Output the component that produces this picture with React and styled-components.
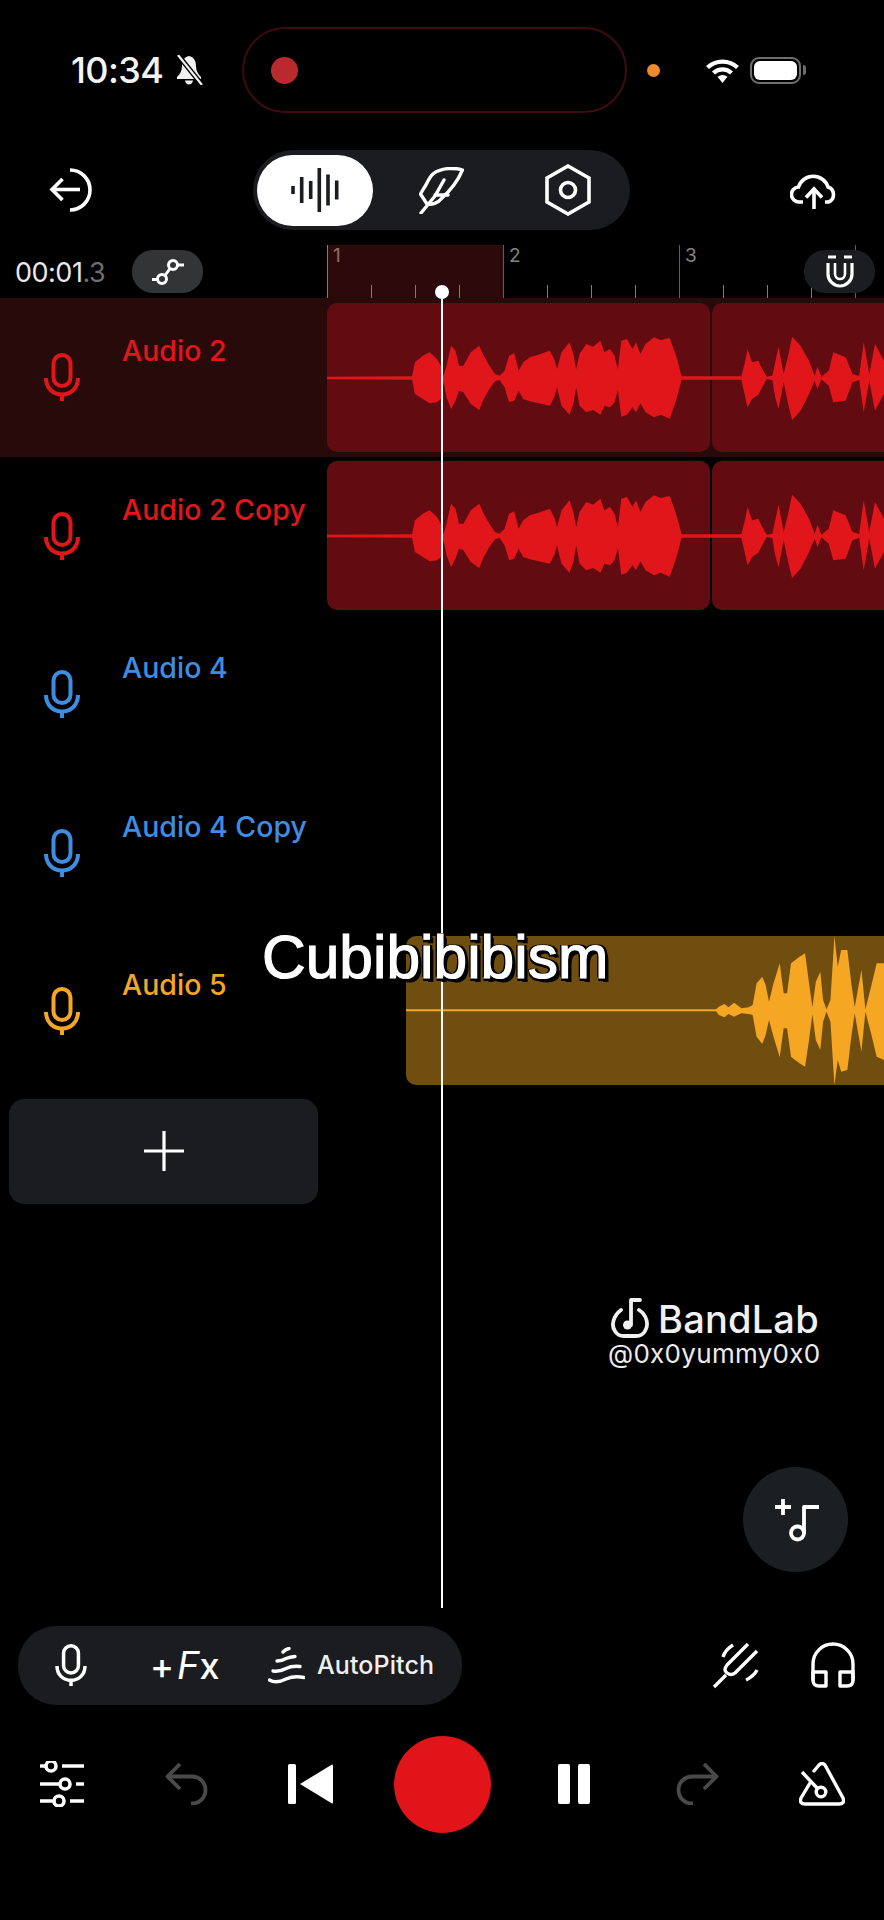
import React from "react";
import styled, { createGlobalStyle } from "styled-components";

const Global = createGlobalStyle`
  html, body { margin: 0; padding: 0; background: #000; }
  * { box-sizing: border-box; }
`;

const UI = `Inter, "Noto Sans", sans-serif`;

const Page = styled.div`
  position: relative;
  width: 884px;
  height: 1920px;
  overflow: hidden;
  background: #000;
  color: #fff;
  font-family: ${UI};
  display: flex;
  flex-direction: column;
`;

/* status bar */
const StatusBar = styled.div`
  height: 140px;
  display: flex;
  align-items: center;
  padding-left: 71px;
`;
const Clock = styled.div`
  width: 92px;
  font-size: 36px;
  font-weight: 500;
  letter-spacing: -0.6px;
  line-height: 1;
  color: #f4f4f4;
  white-space: nowrap;
`;
const Island = styled.div`
  width: 385px;
  height: 86px;
  margin-left: 39px;
  border: 2px solid #3d0b12;
  border-radius: 43px;
  display: flex;
  align-items: center;
  padding-left: 27px;
`;
const RecDot = styled.div`
  width: 27px;
  height: 27px;
  border-radius: 50%;
  background: #b92a2c;
`;
const OrangeDot = styled.div`
  width: 13px;
  height: 13px;
  border-radius: 50%;
  background: #f18a2b;
  margin-left: 20px;
`;
const Battery = styled.div`
  position: relative;
  width: 51px;
  height: 27px;
  margin-left: 10px;
  border: 2.5px solid #6e6e6e;
  border-radius: 9px;
  padding: 2px;
  &::before {
    content: "";
    display: block;
    height: 100%;
    border-radius: 6px;
    background: #fff;
  }
  &::after {
    content: "";
    position: absolute;
    right: -7px;
    top: 6px;
    width: 3px;
    height: 10px;
    border-radius: 0 3px 3px 0;
    background: #6e6e6e;
  }
`;

/* toolbar */
const Toolbar = styled.div`
  height: 105px;
  display: flex;
  align-items: center;
  justify-content: space-between;
  padding: 0 46px 5px 49px;
`;
const Segment = styled.div`
  width: 377px;
  height: 80px;
  border-radius: 40px;
  background: #1b1c1f;
  display: flex;
  align-items: center;
  padding-left: 4px;
`;
const SegmentActive = styled.div`
  width: 116px;
  height: 71px;
  border-radius: 36px;
  background: #fff;
  display: flex;
  align-items: center;
  justify-content: center;
`;

/* timeline */
const TimelineRow = styled.div`
  position: relative;
  height: 53px;
  display: grid;
  grid-template-columns: 327px 1fr;
`;
const TimeArea = styled.div`
  display: flex;
  align-items: center;
  padding-left: 15px;
`;
const TimeText = styled.div`
  width: 117px;
  font-size: 27px;
  font-weight: 400;
  letter-spacing: -0.5px;
  color: #e8e8e8;
  white-space: nowrap;
  margin-top: 1px;
  span { color: #6f6f6f; }
`;
const RoundButton = styled.div`
  width: 71px;
  height: 43px;
  border-radius: 21px;
  background: ${(p) => p.$bg};
  display: flex;
  align-items: center;
  justify-content: center;
`;
const MagnetSlot = styled.div`
  position: absolute;
  right: 9px;
  top: 5px;
`;
const Ruler = styled.div`
  display: flex;
  overflow: hidden;
`;
const Bar = styled.div`
  flex: 0 0 176px;
  height: 53px;
  border-left: 1.5px solid ${(p) => (p.$active ? "#8a7476" : "#5c5f63")};
  background: ${(p) => (p.$active ? "#2c0a0c" : "transparent")};
  display: flex;
  flex-direction: column;
  justify-content: space-between;
`;
const BarNumber = styled.div`
  font-size: 19px;
  line-height: 20px;
  padding-left: 5px;
  margin-top: 1px;
  color: ${(p) => (p.$active ? "#8d6f72" : "#80858b")};
`;
const Ticks = styled.div`
  display: flex;
  height: 13px;
`;
const Tick = styled.div`
  flex: 0 0 44px;
  margin-left: ${(p) => (p.$first ? "-1.5px" : "0")};
  border-left: 1.5px solid ${(p) => (p.$first ? "transparent" : "#7a7d80")};
`;

/* tracks */
const Track = styled.div`
  height: 158.6px;
  display: grid;
  grid-template-columns: 327px 1fr;
  background: ${(p) => (p.$selected ? "#290a0b" : "transparent")};
`;
const TrackHead = styled.div`
  display: flex;
  align-items: flex-start;
  color: ${(p) => p.$color};
  padding-left: 44px;
`;
const MicSlot = styled.div`
  margin-top: 55px;
  width: 36px;
`;
const TrackName = styled.div`
  margin-left: 42px;
  margin-top: 36px;
  font-size: 28.5px;
  line-height: 34px;
  font-weight: 500;
  white-space: nowrap;
`;
const Lane = styled.div`
  position: relative;
  display: flex;
  gap: 2px;
  padding-top: ${(p) => p.$top}px;
  padding-left: ${(p) => p.$left}px;
`;
const Clip = styled.div`
  flex: 0 0 ${(p) => p.$w}px;
  height: 149px;
  background: ${(p) => p.$bg};
  border-radius: ${(p) => p.$radius};
`;
const WaveSvg = styled.svg`
  position: absolute;
  left: ${(p) => p.$left}px;
  top: ${(p) => p.$top}px;
  display: block;
`;
const AddTrack = styled.div`
  width: 309px;
  height: 105px;
  margin: 8px 0 0 9px;
  border-radius: 15px;
  background: #1b1c1f;
  display: flex;
  align-items: center;
  justify-content: center;
`;

/* middle area */
const Workspace = styled.div`
  height: 422px;
  display: flex;
  flex-direction: column;
  align-items: flex-end;
`;
const Watermark = styled.div`
  margin-top: 93px;
  margin-right: 62px;
  width: 214px;
  display: flex;
  flex-direction: column;
`;
const BrandRow = styled.div`
  display: flex;
  align-items: center;
  gap: 8px;
  padding-left: 2px;
  height: 42px;
`;
const BrandName = styled.div`
  font-size: 38px;
  font-weight: 500;
  letter-spacing: 0.2px;
  line-height: 1;
  margin-top: 3px;
  color: #f1f1f1;
`;
const Handle = styled.div`
  font-size: 26px;
  line-height: 30px;
  letter-spacing: 0.3px;
  color: #ececec;
  white-space: nowrap;
`;
const Fab = styled.div`
  width: 105px;
  height: 105px;
  margin-top: 98px;
  margin-right: 36px;
  border-radius: 50%;
  background: #1c1f22;
  display: flex;
  align-items: center;
  justify-content: center;
`;

/* bottom controls */
const ToolRow = styled.div`
  height: 79px;
  display: flex;
  align-items: center;
  justify-content: space-between;
  padding: 0 29px 0 18px;
`;
const ToolPill = styled.div`
  width: 444px;
  height: 79px;
  border-radius: 38px;
  background: #1b1c1f;
  display: flex;
  align-items: center;
  padding-left: 37px;
`;
const FxLabel = styled.div`
  margin-left: 63px;
  width: 66px;
  font-size: 36px;
  line-height: 1;
  font-weight: 500;
  white-space: nowrap;
  b { font-weight: 400; font-style: italic; margin-left: 3px; font-size: 38px; }
  span { font-weight: 500; letter-spacing: -1px; }
`;
const PitchLabel = styled.div`
  margin-left: 12px;
  font-size: 25px;
  font-weight: 500;
  letter-spacing: 0.1px;
  color: #f0f0f0;
`;
const RightTools = styled.div`
  display: flex;
  align-items: center;
  gap: 52px;
`;
const Slot = styled.div`
  margin-left: ${(p) => p.$ml || 0}px;
  display: flex;
`;
const Transport = styled.div`
  height: 97px;
  margin-top: 31px;
  padding-left: 40px;
  display: flex;
  align-items: center;
`;
const RecordButton = styled.div`
  width: 97px;
  height: 97px;
  border-radius: 50%;
  background: #e01419;
  margin-left: 60px;
`;
const Pause = styled.div`
  margin-left: 67px;
  display: flex;
  gap: 8px;
  &::before, &::after {
    content: "";
    width: 12px;
    height: 40px;
    border-radius: 2px;
    background: #fff;
  }
`;

/* overlays */
const Playhead = styled.div`
  position: absolute;
  left: 440.5px;
  top: 291px;
  width: 2.5px;
  height: 1317px;
  background: #fff;
`;
const PlayheadKnob = styled.div`
  position: absolute;
  left: 434.5px;
  top: 284.5px;
  width: 14px;
  height: 14px;
  border-radius: 50%;
  background: #fff;
`;
const Caption = styled.div`
  position: absolute;
  left: 262px;
  top: 922px;
  font-family: "Liberation Sans", Arial, sans-serif;
  font-size: 60.5px;
  line-height: 70px;
  color: #fff;
  white-space: nowrap;
  -webkit-text-stroke: 1.2px #fff;
  text-shadow: 2px 2px 0 #000, 3px 3px 0 #000, 4px 4px 0 #000, -2px -1px 0 #000, 3px -1px 0 #000, -1px 3px 0 #000;
`;

/* icons */
const Line = (p) => <svg fill="none" stroke="currentColor" strokeLinecap="round" strokeLinejoin="round" style={{ display: "block", color: p.color || "#fff" }} {...p} />;

const Mic = ({ color = "currentColor", w = 36, h = 48 }) => (
  <Line width={w} height={h} viewBox="0 0 36 48" strokeWidth="4" color={color} strokeLinecap="butt">
    <rect x="9.5" y="2" width="17" height="31" rx="8.5" />
    <path d="M2 25 C2 35 9 41.5 18 41.5 C27 41.5 34 35 34 25" />
    <path d="M18 41 V48" />
  </Line>
);
const BellSlash = () => (
  <svg width="28" height="30" viewBox="0 0 28 30" style={{ display: "block", marginLeft: 12 }}>
    <path fill="#f2f2f2" d="M14 1 C9 2 7 6 7 11 C7 16 5 19 2 22 V24 H26 V22 C23 19 21 16 21 11 C21 6 19 2 14 1 Z M10 25.5 H18 C17.5 28 16 29.5 14 29.5 C12 29.5 10.5 28 10 25.5 Z" />
    <path stroke="#000" strokeWidth="5" d="M3 0 L27 30" />
    <path stroke="#f2f2f2" strokeWidth="2.2" d="M3 0 L27 30" />
  </svg>
);
const Wifi = () => (
  <svg width="35" height="25" viewBox="0 0 35 25" fill="none" style={{ display: "block", marginLeft: 45 }}>
    <path stroke="#fff" strokeWidth="4.4" d="M2.5 9.5 A22 22 0 0 1 32.5 9.5" />
    <path stroke="#fff" strokeWidth="4.4" d="M8.5 15 A13 13 0 0 1 26.5 15" />
    <path fill="#fff" d="M12.5 18.8 Q17.5 15 22.5 18.8 L17.5 25 Z" />
  </svg>
);
const Back = () => (
  <Line width="44" height="44" viewBox="0 0 44 44" strokeWidth="3.6" strokeLinecap="butt" strokeLinejoin="miter">
    <path d="M21 2 A20 20 0 0 1 21 42" />
    <path d="M3 21.5 H31" />
    <path d="M13.5 11 L3 21.5 L13.5 32" />
  </Line>
);
const Bars = () => (
  <svg width="48" height="44" viewBox="0 0 48 44" style={{ display: "block" }}>
    {[[2, 8], [10.7, 26], [19.7, 18], [28.3, 44], [37, 31], [45.7, 19]].map(([x, h]) => (
      <rect key={x} x={x - 1.8} y={22 - h / 2} width="3.6" height={h} fill="#1b1c1f" />
    ))}
  </svg>
);
const FeatherIcon = () => (
  <Line width="45" height="47" viewBox="0 0 45 47" strokeWidth="3.4" style={{ display: "block", color: "#fff", marginLeft: 46 }}>
    <path d="M43.5 3 C36 0.5 22 0.5 14 7 C9.5 11 8 17 5 21 L1.5 27 L8 37 C13 38 19 36 22 32 C30 25 38 16 43.5 3 Z" />
    <path d="M2 46 L16 29 L25 13" />
    <path d="M16 28 H29" />
  </Line>
);
const Hex = () => (
  <Line width="46" height="52" viewBox="0 0 46 52" strokeWidth="3.6" strokeLinejoin="miter" style={{ display: "block", color: "#fff", marginLeft: 81 }}>
    <path d="M23 2 L44 14 V38 L23 50 L2 38 V14 Z" />
    <circle cx="23" cy="26" r="7.5" />
  </Line>
);
const Upload = () => (
  <Line width="48" height="38" viewBox="0 0 48 38" strokeWidth="3.6" strokeLinecap="butt" strokeLinejoin="miter">
    <path d="M13 31 H9.5 A7.5 7.5 0 0 1 8.5 16 A15.5 15.5 0 0 1 38 16 A8 8 0 0 1 38.5 31 H35" />
    <path d="M24 38 V19" />
    <path d="M16 26.5 L24 18 L32 26.5" />
  </Line>
);
const LinkIcon = () => (
  <Line width="34" height="30" viewBox="0 0 34 30" strokeWidth="3" strokeLinecap="butt">
    <circle cx="11" cy="22" r="4.5" />
    <circle cx="22" cy="8" r="4.5" />
    <path d="M14 18.5 L19 11.5 M1 22.5 H6.5 M26.5 8 H33" />
  </Line>
);
const Magnet = () => (
  <Line width="30" height="34" viewBox="0 0 30 34" strokeWidth="3.2" strokeLinecap="butt">
    <path d="M3 2 H11 M19 2 H27" />
    <path d="M3 8 V19 A12 12 0 0 0 27 19 V8" />
    <path d="M10 8 V19 A5 5 0 0 0 20 19 V8" strokeWidth="2.6" />
  </Line>
);
const Plus = () => (
  <Line width="42" height="42" viewBox="0 0 42 42" strokeWidth="3.2" strokeLinecap="butt">
    <path d="M21 1 V41 M1 21 H41" />
  </Line>
);
const Logo = () => (
  <Line width="40" height="41" viewBox="0 0 40 41" strokeWidth="3.8" color="#f1f1f1">
    <path d="M11 13 C3 19 1 29 5 34 C7 38 11 39 14 39 H26 C30 39 33 38 35 34 C39 28 37 18 29 13" />
    <path d="M21 28 V3 H30" />
    <circle cx="17.5" cy="28" r="4.5" fill="#f1f1f1" stroke="none" />
  </Line>
);
const AddNote = () => (
  <Line width="48" height="47" viewBox="0 0 48 47" strokeWidth="3.8" strokeLinecap="butt">
    <path d="M11 3 V19 M3 11 H19" />
    <path d="M32 38 V11 H47" />
    <circle cx="25.5" cy="37" r="6.5" />
  </Line>
);
const Pitch = () => (
  <Line width="37" height="37" viewBox="0 0 37 37" strokeWidth="3.4" style={{ display: "block", color: "#fff", marginLeft: 52 }}>
    <path d="M15 5 Q18 2 21 1.5" />
    <path d="M9 14 Q14 14 18 11.5 Q22 10 27 9.5" />
    <path d="M5 24 Q12 25 18 21.5 Q24 18.5 32 19.5" />
    <path d="M1.5 33 Q8 37 18 32 Q26 28.5 36 30.5" />
  </Line>
);
const Fork = () => (
  <Line width="47" height="47" viewBox="0 0 47 47" strokeWidth="3.4" strokeLinecap="butt">
    <path d="M2 45 L14 33" />
    <path d="M36 2 L15 23 Q11 28 15 31 Q19 34 23 31 L45 9" />
    <path d="M11 15 Q13 8 21 3" />
    <path d="M34 38 Q42 34 45 28" />
  </Line>
);
const Headphones = () => (
  <Line width="44" height="46" viewBox="0 0 44 46" strokeWidth="3.4">
    <path d="M2 38 V22 A20 20 0 0 1 42 22 V38" />
    <path d="M2 30 H15 V44 H8 Q2 44 2 38 Z" />
    <path d="M42 30 H29 V44 H36 Q42 44 42 38 Z" />
  </Line>
);
const Sliders = () => (
  <Line width="44" height="46" viewBox="0 0 44 46" strokeWidth="3.6" strokeLinecap="butt">
    <path d="M0 5 H6 M22 5 H44 M0 23 H20 M36 23 H44 M0 40 H14 M30 40 H44" />
    <circle cx="11" cy="5" r="5" />
    <circle cx="25" cy="23" r="5" />
    <circle cx="19" cy="40" r="5" />
  </Line>
);
const Undo = ({ flip, ml }) => (
  <Slot $ml={ml}>
    <Line width="44" height="42" viewBox="0 0 44 42" strokeWidth="3.8" strokeLinecap="butt" color="#4a4a4a">
      <g transform={flip ? "translate(44 0) scale(-1 1)" : undefined}>
        <path d="M3 13.5 H27 A13.5 13.5 0 0 1 27 40.5 H26" />
        <path d="M15 1 L2.5 13.5 L15 26" />
      </g>
    </Line>
  </Slot>
);
const SkipBack = () => (
  <svg width="46" height="40" viewBox="0 0 46 40" style={{ display: "block", marginLeft: 79 }}>
    <rect x="0" y="0" width="8" height="40" rx="1.5" fill="#fff" />
    <path d="M12 20 L44 0.5 Q45 0 45 2 V38 Q45 40 44 39.5 Z" fill="#fff" />
  </svg>
);
const Metronome = () => (
  <Line width="46" height="44" viewBox="0 0 46 44" strokeWidth="3.4" style={{ display: "block", color: "#fff", marginLeft: 80 }}>
    <path d="M15 9 L20 3 Q23 0 26 3 L44 36 Q46 42 40 42 H6 Q0 42 2 36 L11 21" />
    <path d="M3 10 L19 27" strokeLinecap="butt" />
    <circle cx="22" cy="30" r="4.8" />
  </Line>
);

/* waveform outlines: [x, top, bottom] in waveform units */
const RED_WAVE = [
  [580, 258, 266], [731, 257, 267], [736, 215, 310], [750, 195, 325], [762, 185, 338], [775, 205, 335], [782, 225, 325], [787, 255, 275],
  [792, 225, 320], [800, 165, 355], [808, 180, 330], [814, 225, 300], [822, 225, 305], [835, 185, 340], [850, 165, 358], [858, 195, 325], [868, 225, 295], [878, 250, 272],
  [886, 255, 268], [895, 240, 290], [903, 195, 335], [912, 188, 330], [920, 240, 300], [928, 215, 325], [940, 200, 332], [955, 192, 338],
  [975, 180, 345], [983, 205, 320], [988, 235, 290], [996, 185, 345], [1010, 155, 372], [1017, 190, 340], [1022, 236, 290], [1028, 190, 345], [1040, 160, 365],
  [1052, 168, 358], [1065, 150, 372], [1072, 185, 345], [1082, 175, 350], [1090, 195, 335], [1096, 236, 298], [1102, 150, 378], [1112, 145, 372], [1122, 175, 350], [1128, 155, 365], [1136, 190, 338],
  [1145, 160, 365], [1160, 140, 380], [1172, 148, 372], [1188, 142, 384], [1200, 200, 325], [1209, 257, 267], [1315, 257, 267], [1322, 210, 320], [1326, 175, 350],
  [1334, 215, 325], [1345, 210, 312], [1352, 235, 290], [1360, 258, 265], [1370, 255, 268], [1375, 215, 320], [1381, 168, 355], [1390, 250, 275], [1398, 195, 340], [1405, 138, 388],
  [1420, 165, 360], [1435, 210, 310], [1445, 255, 270], [1450, 228, 295], [1457, 258, 266], [1470, 240, 285], [1478, 185, 335],
  [1500, 200, 330], [1512, 250, 275], [1524, 256, 268], [1532, 155, 365], [1542, 250, 270], [1552, 160, 360], [1568, 210, 310],
];
const AMBER_WAVE = [
  [720, 328, 334], [1270, 328, 334], [1275, 320, 345], [1285, 312, 352], [1292, 322, 342], [1302, 308, 350], [1315, 325, 340],
  [1328, 322, 342], [1335, 315, 345], [1342, 250, 410], [1352, 230, 432], [1358, 255, 405], [1364, 305, 360], [1372, 250, 410], [1383, 190, 472],
  [1390, 280, 385], [1396, 280, 385], [1403, 190, 470], [1418, 170, 490], [1428, 160, 500], [1435, 250, 420], [1441, 322, 343], [1447, 245, 420], [1455, 215, 450], [1460, 300, 365],
  [1466, 328, 335], [1473, 300, 365], [1480, 108, 555], [1486, 200, 480], [1492, 150, 515], [1503, 150, 510], [1510, 250, 410], [1516, 322, 340], [1528, 210, 455], [1535, 328, 335],
  [1545, 260, 400], [1555, 190, 470], [1568, 190, 480],
];
const outline = (pts) =>
  "M" + pts.map((p) => `${p[0]} ${p[1]}`).join(" L") + " L" + [...pts].reverse().map((p) => `${p[0]} ${p[2]}`).join(" L") + " Z";

const Wave = ({ pts, color, left, top, width, box }) => (
  <WaveSvg $left={left} $top={top} width={width} height="149" viewBox={box} preserveAspectRatio="none">
    <path d={outline(pts)} fill={color} />
  </WaveSvg>
);

const RED = "#e0161b";
const BLUE = "#3f8de0";
const AMBER = "#f5a623";

const RedLane = ({ top }) => (
  <Lane $top={top} $left={0}>
    <Clip $w={383} $bg="#620c11" $radius="10px" />
    <Clip $w={200} $bg="#620c11" $radius="10px 0 0 10px" />
    <Wave pts={RED_WAVE} color={RED} left={0} top={top} width={557} box="580 37 988 447" />
  </Lane>
);

export default function App() {
  return (
    <Page>
      <Global />
      <StatusBar>
        <Clock>10:34</Clock>
        <BellSlash />
        <Island>
          <RecDot />
        </Island>
        <OrangeDot />
        <Wifi />
        <Battery />
      </StatusBar>

      <Toolbar>
        <Back />
        <Segment>
          <SegmentActive><Bars /></SegmentActive>
          <FeatherIcon />
          <Hex />
        </Segment>
        <Upload />
      </Toolbar>

      <TimelineRow>
        <TimeArea>
          <TimeText>00:01<span>.3</span></TimeText>
          <RoundButton $bg="#333436"><LinkIcon /></RoundButton>
        </TimeArea>
        <Ruler>
          {[1, 2, 3, 4].map((n) => (
            <Bar key={n} $active={n === 1}>
              <BarNumber $active={n === 1}>{n <= 3 ? n : ""}</BarNumber>
              <Ticks>
                {[0, 1, 2, 3].map((t) => <Tick key={t} $first={t === 0} />)}
              </Ticks>
            </Bar>
          ))}
        </Ruler>
        <MagnetSlot>
          <RoundButton $bg="#1c1d20"><Magnet /></RoundButton>
        </MagnetSlot>
      </TimelineRow>

      <Track $selected>
        <TrackHead $color={RED}><MicSlot><Mic /></MicSlot><TrackName>Audio 2</TrackName></TrackHead>
        <RedLane top={5} />
      </Track>
      <Track>
        <TrackHead $color={RED}><MicSlot><Mic /></MicSlot><TrackName>Audio 2 Copy</TrackName></TrackHead>
        <RedLane top={4} />
      </Track>
      <Track>
        <TrackHead $color={BLUE}><MicSlot><Mic /></MicSlot><TrackName>Audio 4</TrackName></TrackHead>
        <Lane $top={0} $left={0} />
      </Track>
      <Track>
        <TrackHead $color={BLUE}><MicSlot><Mic /></MicSlot><TrackName>Audio 4 Copy</TrackName></TrackHead>
        <Lane $top={0} $left={0} />
      </Track>
      <Track>
        <TrackHead $color={AMBER}><MicSlot><Mic /></MicSlot><TrackName>Audio 5</TrackName></TrackHead>
        <Lane $top={4} $left={79}>
          <Clip $w={478} $bg="#6f4e0f" $radius="10px 0 0 10px" />
          <Wave pts={AMBER_WAVE} color={AMBER} left={79} top={4} width={478} box="720 108 848 447" />
        </Lane>
      </Track>

      <AddTrack><Plus /></AddTrack>

      <Workspace>
        <Watermark>
          <BrandRow><Logo /><BrandName>BandLab</BrandName></BrandRow>
          <Handle>@0x0yummy0x0</Handle>
        </Watermark>
        <Fab><AddNote /></Fab>
      </Workspace>

      <ToolRow>
        <ToolPill>
          <Mic w={32} h={42} color="#fff" />
          <FxLabel>+<b>F</b><span>x</span></FxLabel>
          <Pitch />
          <PitchLabel>AutoPitch</PitchLabel>
        </ToolPill>
        <RightTools>
          <Fork />
          <Headphones />
        </RightTools>
      </ToolRow>

      <Transport>
        <Sliders />
        <Undo ml={81} />
        <SkipBack />
        <RecordButton />
        <Pause />
        <Undo flip ml={85} />
        <Metronome />
      </Transport>

      <Playhead />
      <PlayheadKnob />
      <Caption>Cubibibibism</Caption>
    </Page>
  );
}
